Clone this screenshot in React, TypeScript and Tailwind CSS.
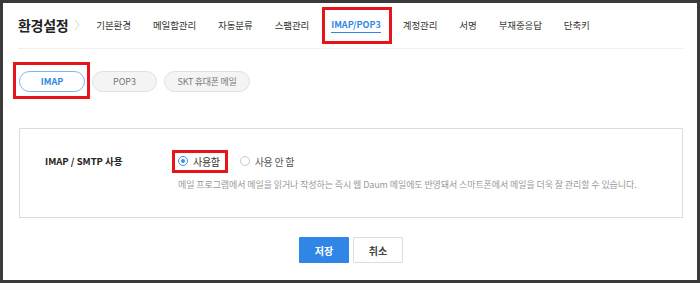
import React from "react";

const navItems = [
  "기본환경",
  "메일함관리",
  "자동분류",
  "스팸관리",
  "IMAP/POP3",
  "계정관리",
  "서명",
  "부재중응답",
  "단축키",
];

function Chevron() {
  return (
    <svg width="6" height="12" viewBox="0 0 6 12" className="ml-[6px] mr-[16px]">
      <path d="M1 1 L5 6 L1 11" fill="none" stroke="#d6d6d6" strokeWidth="1" />
    </svg>
  );
}

function Radio({ checked }: { checked?: boolean }) {
  return (
    <span
      className={
        checked
          ? "flex h-[10px] w-[10px] items-center justify-center rounded-full border border-[#3b8de8] bg-white"
          : "flex h-[10px] w-[10px] items-center justify-center rounded-full border border-[#c8c8c8] bg-white"
      }
    >
      {checked && <span className="h-[4px] w-[4px] rounded-full bg-[#3b8de8]" />}
    </span>
  );
}

export default function App() {
  return (
    <div
      className="h-[283px] w-[700px] border-[3px] border-[#3a3a3a] bg-white text-[#333]"
      style={{ fontFamily: '"Noto Sans CJK KR", "Noto Sans", sans-serif' }}
    >
      <div className="pl-[15px] pr-[14px]">
        {/* Header */}
        <div className="flex h-[46px] items-center border-b border-[#efefef] pb-[1px]">
          <h1 className="text-[14px] font-bold tracking-[-0.3px] text-[#222]">환경설정</h1>
          <Chevron />
          <nav className="flex items-center gap-[22px] text-[9.5px] tracking-[-0.1px] text-[#333]">
            {navItems.map((item) =>
              item === "IMAP/POP3" ? (
                <span key={item} className="relative text-[9px] font-bold tracking-[0px] text-[#2f86e6]">
                  <span className="border-b border-[#2f86e6] pb-[1px]">{item}</span>
                  <span className="absolute -left-[9px] -right-[11px] -top-[11px] -bottom-[12px] border-[3px] border-[#e8141b]" />
                </span>
              ) : (
                <span key={item}>{item}</span>
              )
            )}
          </nav>
        </div>

        {/* Sub tabs */}
        <div className="mt-[22px] flex items-center gap-[7px] pl-[1px] text-[9px]">
          <span className="relative flex h-[21px] w-[66px] items-center justify-center rounded-full border border-[#7fb2f0] bg-white font-bold text-[#2f86e6]">
            IMAP
            <span className="absolute -left-[7px] -right-[6px] -top-[10px] -bottom-[8px] border-[3px] border-[#e8141b]" />
          </span>
          <span className="flex h-[21px] w-[65px] items-center justify-center rounded-full border border-[#e0e0e0] bg-[#f4f4f4] text-[#777]">
            POP3
          </span>
          <span className="flex h-[21px] w-[86px] items-center justify-center rounded-full border border-[#e0e0e0] bg-[#f4f4f4] tracking-[-0.3px] text-[#777]">
            SKT 휴대폰 메일
          </span>
        </div>

        {/* Settings box */}
        <div className="ml-[1px] mt-[36px] h-[90px] border border-[#dcdcdc] pl-[25px] pt-[25px]">
          <div className="flex">
            <div className="w-[133px] text-[9.5px] font-bold leading-[14px] text-[#222]">
              IMAP / SMTP 사용
            </div>
            <div>
              <div className="flex h-[14px] items-center text-[10px] text-[#333]">
                <label className="relative flex items-center gap-[5px]">
                  <Radio checked />
                  <span className="tracking-[-0.3px]">사용함</span>
                  <span className="absolute -left-[6px] -right-[8px] -top-[4px] -bottom-[4px] border-[3px] border-[#e8141b]" />
                </label>
                <label className="ml-[20px] flex items-center gap-[5px]">
                  <Radio />
                  <span className="tracking-[-0.3px] text-[#555]">사용 안 함</span>
                </label>
              </div>
              <p className="mt-[10px] text-[9px] tracking-[-0.1px] text-[#999]">
                메일 프로그램에서 메일을 읽거나 작성하는 즉시 웹 Daum 메일에도 반영돼서 스마트폰에서 메일을 더욱 잘 관리할 수 있습니다.
              </p>
            </div>
          </div>
        </div>

        {/* Buttons */}
        <div className="mt-[19px] flex justify-center gap-[4px] pl-[1px]">
          <button className="h-[26px] w-[50px] rounded-[1px] bg-[#2f86e6] text-[10px] font-bold text-white">
            저장
          </button>
          <button className="h-[26px] w-[50px] rounded-[1px] border border-[#dcdcdc] bg-white text-[10px] font-bold text-[#444]">
            취소
          </button>
        </div>
      </div>
    </div>
  );
}
